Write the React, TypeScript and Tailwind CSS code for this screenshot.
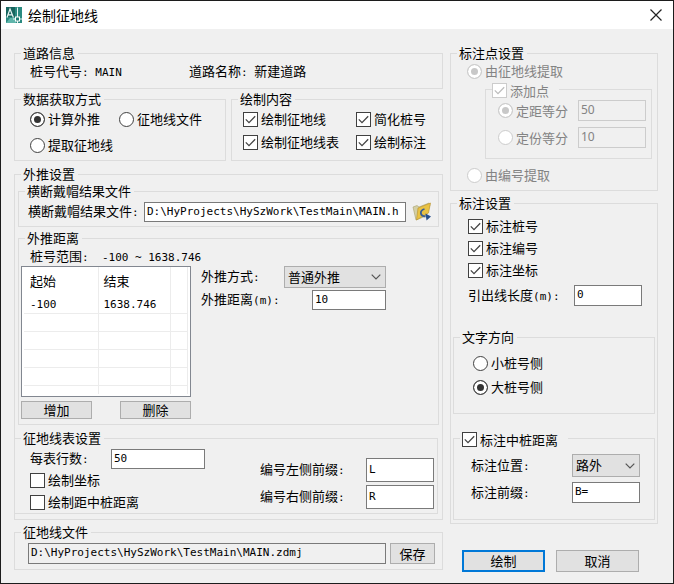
import { useState } from 'react';
import type { InputHTMLAttributes, ReactNode, SelectHTMLAttributes } from 'react';

const cx = (...parts: (string | undefined | false)[]) => parts.filter(Boolean).join(' ');

const MONO = "font-['DejaVu_Sans_Mono','Noto_Sans_CJK_SC',monospace] text-[11px]";
const SANS = "font-['Noto_Sans','Noto_Sans_CJK_SC',sans-serif] text-[12px]";

function Mono({ children }: { children: ReactNode }) {
  return <span className={cx(MONO, 'whitespace-pre')}>{children}</span>;
}

function Group({
  title,
  className,
  legendClassName,
  children,
}: {
  title: ReactNode;
  className?: string;
  legendClassName?: string;
  children: ReactNode;
}) {
  return (
    <fieldset className={cx('min-w-0 border border-[#dcdcdc]', className)}>
      <legend className={cx('ml-[6px] h-[14px] pl-[2px] leading-[13px]', legendClassName ?? 'pr-[3px]')}>{title}</legend>
      {children}
    </fieldset>
  );
}

function Radio({
  label,
  className,
  ...rest
}: { label: string; className?: string } & InputHTMLAttributes<HTMLInputElement>) {
  return (
    <label className={cx('flex items-center gap-[3px]', rest.disabled && 'text-[#838383]', className)}>
      <input
        type="radio"
        className="size-[15px] shrink-0 appearance-none rounded-full border border-[#404040] bg-white checked:bg-[#333333] checked:shadow-[inset_0_0_0_3px_white] disabled:border-[#cccccc] disabled:checked:bg-[#c8c8c8]"
        {...rest}
      />
      {label}
    </label>
  );
}

function Check({
  label,
  className,
  ...rest
}: { label: string; className?: string } & InputHTMLAttributes<HTMLInputElement>) {
  return (
    <label className={cx('flex items-center gap-[3px]', rest.disabled && 'text-[#838383]', className)}>
      <span className="grid shrink-0">
        <input
          type="checkbox"
          className="peer col-start-1 row-start-1 size-[15px] appearance-none border border-[#404040] bg-white disabled:border-[#cccccc]"
          {...rest}
        />
        <svg
          viewBox="0 0 15 15"
          className="pointer-events-none invisible col-start-1 row-start-1 size-[15px] fill-none stroke-[#444444] peer-checked:visible peer-disabled:stroke-[#bdbdbd]"
          strokeWidth="1.3"
        >
          <path d="M2.8 7.4 L6 10.6 L12.2 4.2" />
        </svg>
      </span>
      {label}
    </label>
  );
}

function TextBox({ className, ...rest }: InputHTMLAttributes<HTMLInputElement>) {
  return (
    <input
      type="text"
      className={cx(
        rest.disabled ? SANS : MONO,
        'min-w-0 border border-[#7a7a7a] bg-white px-[2px] pb-[2px] text-black read-only:bg-[#f0f0f0] disabled:border-[#cccccc] disabled:bg-[#f0f0f0] disabled:text-[#838383]',
        className,
      )}
      {...rest}
    />
  );
}

function DropDown({
  className,
  options,
  ...rest
}: { options: string[]; className?: string } & SelectHTMLAttributes<HTMLSelectElement>) {
  return (
    <span className={cx('grid', className)}>
      <select
        className="col-start-1 row-start-1 size-full appearance-none border border-[#adadad] bg-[#e1e1e1] pb-px pl-[3px] text-black"
        {...rest}
      >
        {options.map((o) => (
          <option key={o}>{o}</option>
        ))}
      </select>
      <svg
        viewBox="0 0 10 6"
        className="pointer-events-none col-start-1 row-start-1 mr-[5px] h-[6px] w-[10px] self-center justify-self-end fill-none stroke-[#555555]"
        strokeWidth="1.2"
      >
        <path d="M0.7 0.7 L5 5 L9.3 0.7" />
      </svg>
    </span>
  );
}

function Button({ className, children }: { className?: string; children: ReactNode }) {
  return (
    <button type="button" className={cx('bg-[#e1e1e1] leading-[14px] text-black', className)}>
      {children}
    </button>
  );
}

function AppIcon() {
  return (
    <svg viewBox="0 0 16 16" className="size-4" aria-hidden="true">
      <rect width="16" height="16" fill="#2a8a80" />
      <path d="M0 0 H9 V10 H0 Z" fill="#17655e" />
      <path d="M0 16 L4 11 H10 V16 Z" fill="#5fb5ab" />
      <path d="M1 10.5 L4 2 L7.4 10.5 M2.2 7.8 H6.4" stroke="#e8f5f3" strokeWidth="1.2" fill="none" />
      <path d="M11.5 0.5 V16 M7 12 H16" stroke="#e9f6f4" strokeWidth="1" fill="none" />
      <rect x="9.5" y="10" width="4" height="4" fill="#1d7d72" stroke="#ffffff" />
    </svg>
  );
}

function FolderIcon() {
  return (
    <svg viewBox="0 0 20 20" className="h-5 w-5" aria-hidden="true">
      <path d="M1 5 L5 3.5 L7 5 L17 1 L18 3 L14 14 L4 18 Z" fill="#d3cfa6" stroke="#a8a06a" strokeWidth="0.6" />
      <path d="M6 6 L18.5 1 L16.5 11 L4.5 18 Z" fill="#e9c244" stroke="#b8902c" strokeWidth="0.6" />
      <path d="M12.5 7 C7.5 8.5 7.5 14 13.5 14.5" stroke="#3a5f96" strokeWidth="1.8" fill="none" />
      <path d="M13.5 11.5 L19 14.5 L14.5 18.5 Z" fill="#274f8c" />
    </svg>
  );
}

const LIST_ROWS = [
  ['-100', '1638.746'],
  ['', ''],
  ['', ''],
  ['', ''],
  ['', ''],
];

export default function App() {
  const [source, setSource] = useState('calc');
  const [direction, setDirection] = useState('large');

  return (
    <div className="flex min-h-screen flex-col border border-[#1c1c1c] bg-[#f0f0f0] font-['Noto_Sans_CJK_SC',sans-serif] text-[13px] leading-[14px] whitespace-nowrap text-black">
      <header className="flex h-[28px] items-center gap-[6px] bg-white pr-[10px] pl-[5px]">
        <AppIcon />
        <h1 className="flex-1 text-[14px]">绘制征地线</h1>
        <button type="button" aria-label="关闭">
          <svg viewBox="0 0 14 14" className="size-[14px] stroke-[#222222]" strokeWidth="1.2">
            <path d="M1.5 1.5 L12.5 12.5 M12.5 1.5 L1.5 12.5" />
          </svg>
        </button>
      </header>

      <main className="grid grid-cols-[minmax(0,1fr)_208px] gap-[7px] pt-[17px] pr-[15px] pl-[13px]">
        <div className="flex flex-col">
          <Group title="道路信息">
            <div className="mb-1 flex h-6 items-center pl-[15px]">
              <p className="w-[159px]">
                桩号代号<Mono>: MAIN</Mono>
              </p>
              <p>
                道路名称<Mono>: </Mono>新建道路
              </p>
            </div>
          </Group>

          <div className="mt-[3px] grid grid-cols-2 gap-[5px]">
            <Group title="数据获取方式">
              <div className="flex flex-col gap-1 pt-[2px] pb-1 pl-[15px]">
                <div className="flex h-[22px] items-center gap-[19px]">
                  <Radio label="计算外推" name="source" checked={source === 'calc'} onChange={() => setSource('calc')} />
                  <Radio label="征地线文件" name="source" checked={source === 'file'} onChange={() => setSource('file')} />
                </div>
                <Radio
                  className="h-[22px]"
                  label="提取征地线"
                  name="source"
                  checked={source === 'pick'}
                  onChange={() => setSource('pick')}
                />
              </div>
            </Group>
            <Group title="绘制内容">
              <div className="grid grid-cols-[113px_1fr] gap-y-px pt-[2px] pl-[11px]">
                <Check className="h-[22px]" label="绘制征地线" defaultChecked />
                <Check className="h-[22px]" label="简化桩号" defaultChecked />
                <Check className="h-[22px]" label="绘制征地线表" defaultChecked />
                <Check className="h-[22px]" label="绘制标注" defaultChecked />
              </div>
            </Group>
          </div>

          <Group title="外推设置" className="mt-[6px] pb-[5px]">
            <div className="flex flex-col gap-1 px-[3px] pt-[3px]">
              <Group title="横断戴帽结果文件">
                <div className="flex items-center pt-1 pr-[6px] pb-1 pl-[9px]">
                  <label htmlFor="section-file" className="w-[116px] shrink-0">
                    横断戴帽结果文件<Mono>:</Mono>
                  </label>
                  <TextBox id="section-file" className="h-5 flex-1" defaultValue="D:\HyProjects\HySzWork\TestMain\MAIN.h" />
                  <button type="button" aria-label="浏览" className="ml-[6px]">
                    <FolderIcon />
                  </button>
                </div>
              </Group>

              <Group title="外推距离">
                <div className="px-[2px] pb-[5px]">
                  <p className="h-[21px] pl-[9px] leading-[21px]">
                    桩号范围<Mono>:  -100 ~ 1638.746</Mono>
                  </p>
                  <div className="flex gap-[10px]">
                    <div className="w-[170px]">
                      <div className="h-[131px] overflow-hidden border border-[#828790] bg-white px-[2px]">
                        <table className="w-full table-fixed border-collapse">
                          <thead>
                            <tr className="h-[28px]">
                              <th className="w-[74px] border-r border-[#ececec] pl-[6px] text-left font-normal">起始</th>
                              <th className="border-r border-[#ececec] pl-[5px] text-left font-normal">结束</th>
                              <th className="w-[17px] border-r border-[#ececec]" aria-label="空列" />
                            </tr>
                          </thead>
                          <tbody>
                            {LIST_ROWS.map((row, i) => (
                              <tr key={i} className="h-[18px] border-b border-[#ececec]">
                                <td className="border-r border-[#ececec] pl-[6px]">
                                  <Mono>{row[0]}</Mono>
                                </td>
                                <td className="border-r border-[#ececec] pl-[5px]">
                                  <Mono>{row[1]}</Mono>
                                </td>
                                <td className="border-r border-[#ececec]" />
                              </tr>
                            ))}
                            <tr className="h-[9px]">
                              <td className="border-r border-[#ececec]" />
                              <td className="border-r border-[#ececec]" />
                              <td className="border-r border-[#ececec]" />
                            </tr>
                          </tbody>
                        </table>
                      </div>
                      <div className="flex justify-between pt-1">
                        <Button className="h-[18px] w-[71px] border border-[#adadad]">增加</Button>
                        <Button className="h-[18px] w-[71px] border border-[#adadad]">删除</Button>
                      </div>
                    </div>
                    <div className="flex w-[185px] flex-col gap-[2px]">
                      <div className="flex items-center justify-between">
                        <label htmlFor="mode">
                          外推方式<Mono>:</Mono>
                        </label>
                        <DropDown id="mode" className="h-[22px] w-[102px]" options={['普通外推']} />
                      </div>
                      <div className="flex items-center justify-between">
                        <label htmlFor="distance">
                          外推距离<Mono>(m):</Mono>
                        </label>
                        <TextBox id="distance" className="h-5 w-[74px]" defaultValue="10" />
                      </div>
                    </div>
                  </div>
                </div>
              </Group>
            </div>

            <Group title="征地线表设置" className="mt-[6px] mr-1 -ml-px">
              <div className="flex justify-between pr-[3px] pl-[15px]">
                <div className="pt-1">
                  <div className="flex h-5 items-center">
                    <label htmlFor="rows" className="w-[81px]">
                      每表行数<Mono>:</Mono>
                    </label>
                    <TextBox id="rows" className="h-5 w-[94px]" defaultValue="50" />
                  </div>
                  <Check className="h-[22px]" label="绘制坐标" />
                  <Check className="h-[22px]" label="绘制距中桩距离" />
                </div>
                <div className="flex w-[174px] flex-col gap-[3px] pt-[13px]">
                  <div className="flex items-center justify-between">
                    <label htmlFor="left-prefix">
                      编号左侧前缀<Mono>:</Mono>
                    </label>
                    <TextBox id="left-prefix" className="h-6 w-[68px]" defaultValue="L" />
                  </div>
                  <div className="flex items-center justify-between">
                    <label htmlFor="right-prefix">
                      编号右侧前缀<Mono>:</Mono>
                    </label>
                    <TextBox id="right-prefix" className="h-6 w-[68px]" defaultValue="R" />
                  </div>
                </div>
              </div>
            </Group>
          </Group>

          <Group title="征地线文件" className="mt-[5px]">
            <div className="flex gap-1 pt-1 pr-[7px] pb-[5px] pl-[13px]">
              <TextBox
                aria-label="征地线文件"
                readOnly
                className="h-[21px] flex-1"
                defaultValue="D:\HyProjects\HySzWork\TestMain\MAIN.zdmj"
              />
              <Button className="h-[21px] w-[45px] border border-[#adadad]">保存</Button>
            </div>
          </Group>
        </div>

        <div className="flex flex-col">
          <Group title="标注点设置">
            <Radio className="h-[22px] pl-4" label="由征地线提取" name="origin" disabled defaultChecked />
            <Group
              title={<Check className="-ml-[2px] h-[17px]" label="添加点" disabled defaultChecked />}
              className="mr-[5px] ml-[34px]"
              legendClassName="pr-[10px]"
            >
              <div className="flex flex-col gap-[6px] pt-1 pr-[5px] pb-[10px] pl-3">
                <div className="flex items-center justify-between">
                  <Radio label="定距等分" name="split" disabled defaultChecked />
                  <TextBox aria-label="定距等分" className="h-[21px] w-[68px]" disabled defaultValue="50" />
                </div>
                <div className="flex items-center justify-between">
                  <Radio label="定份等分" name="split" disabled />
                  <TextBox aria-label="定份等分" className="h-[21px] w-[68px]" disabled defaultValue="10" />
                </div>
              </div>
            </Group>
            <Radio className="mt-[5px] mb-1 h-[22px] pl-4" label="由编号提取" name="origin" disabled />
          </Group>

          <Group title="标注设置" className="mt-[5px] pb-[3px]">
            <div className="pt-[5px] pr-[15px] pl-[17px]">
              <Check className="h-[22px]" label="标注桩号" defaultChecked />
              <Check className="h-[22px]" label="标注编号" defaultChecked />
              <Check className="h-[22px]" label="标注坐标" defaultChecked />
              <div className="flex items-center justify-between pt-1">
                <label htmlFor="leader">
                  引出线长度<Mono>(m):</Mono>
                </label>
                <TextBox id="leader" className="h-[21px] w-[68px]" defaultValue="0" />
              </div>
            </div>

            <div className="flex flex-col gap-[17px] px-[2px] pt-6">
              <Group title="文字方向">
                <div className="pt-[7px] pb-[14px] pl-[19px]">
                  <Radio
                    className="h-6"
                    label="小桩号侧"
                    name="direction"
                    checked={direction === 'small'}
                    onChange={() => setDirection('small')}
                  />
                  <Radio
                    className="h-6"
                    label="大桩号侧"
                    name="direction"
                    checked={direction === 'large'}
                    onChange={() => setDirection('large')}
                  />
                </div>
              </Group>

              <Group
                title={<Check className="h-[17px]" label="标注中桩距离" defaultChecked />}
                legendClassName="pr-[10px]"
              >
                <div className="flex flex-col gap-[5px] pt-[9px] pr-[14px] pb-4 pl-[17px]">
                  <div className="flex items-center justify-between">
                    <label htmlFor="position">
                      标注位置<Mono>:</Mono>
                    </label>
                    <DropDown id="position" className="h-[23px] w-[68px]" options={['路外']} />
                  </div>
                  <div className="flex items-center justify-between">
                    <label htmlFor="label-prefix">
                      标注前缀<Mono>:</Mono>
                    </label>
                    <TextBox id="label-prefix" className="h-[21px] w-[68px]" defaultValue="B=" />
                  </div>
                </div>
              </Group>
            </div>
          </Group>

          <div className="mt-[26px] flex justify-between pr-[19px] pl-3">
            <Button className="h-[22px] w-[83px] border-2 border-[#0078d7]">绘制</Button>
            <Button className="h-[22px] w-[83px] border border-[#adadad]">取消</Button>
          </div>
        </div>
      </main>
    </div>
  );
}
